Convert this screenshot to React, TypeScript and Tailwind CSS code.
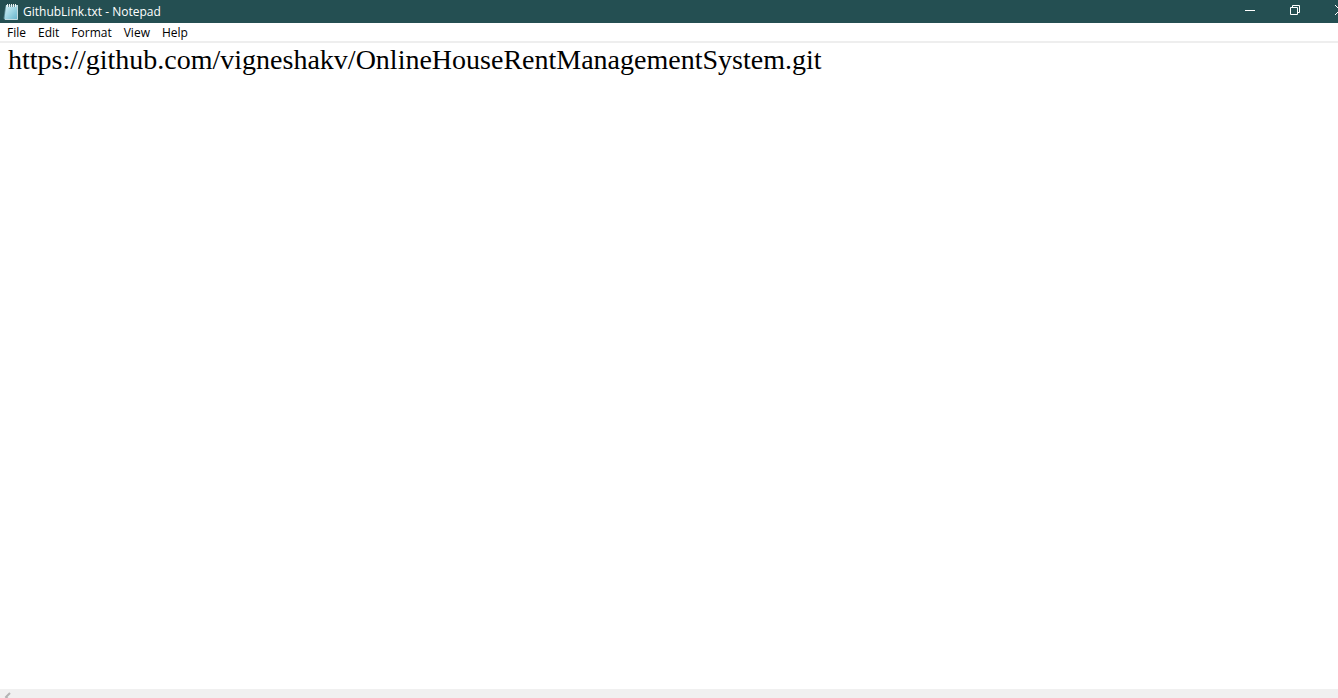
import { useState } from "react";

const menus = ["File", "Edit", "Format", "View", "Help"];

function NotepadIcon() {
  return (
    <svg width="16" height="18" viewBox="0 0 16 18" aria-hidden="true">
      <defs>
        <linearGradient id="paper" x1="0" y1="0" x2="1" y2="1">
          <stop offset="0" stopColor="#d5f0f5" />
          <stop offset="0.500" stopColor="#9fd6e4" />
          <stop offset="1" stopColor="#65b3cb" />
        </linearGradient>
      </defs>
      <path d="M2.500 2L0.500 15.500L3 17Z" fill="#5d8e99" />
      <path d="M3 2H14.500V16.500H1.500Z" fill="url(#paper)" />
      <path d="M14.500 2V16.500H2" fill="none" stroke="#c4dce1" />
      <path d="M4.500 1V4M6.500 1V4M8.500 1V4M10.500 1V4M12.500 1V4" stroke="#eef5f5" />
      <path d="M5.500 2V4M7.500 2V4M9.500 2V4M11.500 2V4" stroke="#688f98" />
    </svg>
  );
}

export default function App() {
  const [text, setText] = useState(
    "https://github.com/vigneshakv/OnlineHouseRentManagementSystem.git"
  );
  return (
    <div className="flex h-screen flex-col overflow-hidden bg-white font-['Open_Sans','Noto_Sans',sans-serif] text-xs text-black">
      <header className="flex h-[23px] shrink-0 items-center bg-[#244f52] pl-[3px] text-white">
        <NotepadIcon />
        <h1 className="ml-1 flex-1">GithubLink.txt - Notepad</h1>
        <div className="-mr-6 flex h-full shrink-0 pb-[3px]">
          <button aria-label="Minimize" className="flex w-[45px] items-center justify-center">
            <svg width="10" height="10" viewBox="0 0 10 10"><path d="M0 5.500H10" stroke="white" /></svg>
          </button>
          <button aria-label="Restore" className="flex w-[45px] items-center justify-center">
            <svg width="10" height="10" viewBox="0 0 10 10" fill="none" stroke="white"><path d="M0.500 2.500H7.500V9.500H0.500ZM2.500 2.500V0.500H9.500V7.500H7.500" /></svg>
          </button>
          <button aria-label="Close" className="flex w-[45px] items-center justify-center">
            <svg width="10" height="10" viewBox="0 0 10 10"><path d="M0 0L10 10M10 0L0 10" stroke="white" /></svg>
          </button>
        </div>
      </header>
      <nav aria-label="Menu bar" className="flex h-5 shrink-0 items-center gap-3 border-b-2 border-[#eeeeee] px-[7px] pt-px">
        {menus.map((m) => (
          <button key={m}>{m}</button>
        ))}
      </nav>
      <textarea
        aria-label="Document text"
        spellCheck={false}
        wrap="off"
        value={text}
        onChange={(e) => setText(e.target.value)}
        className="min-h-0 w-full flex-1 resize-none overflow-hidden px-2 py-px font-['Liberation_Serif',serif] text-[28px] leading-8 outline-none"
      />
      <footer className="flex h-[9px] shrink-0 items-start overflow-hidden bg-[#f0f0f0]">
        <button aria-label="Scroll left" className="pl-1 pt-[3px]">
          <svg width="8" height="10" viewBox="0 0 8 10" fill="none" stroke="#b4b4b4" strokeWidth="2"><path d="M6 1L2 5L6 9" /></svg>
        </button>
      </footer>
    </div>
  );
}
